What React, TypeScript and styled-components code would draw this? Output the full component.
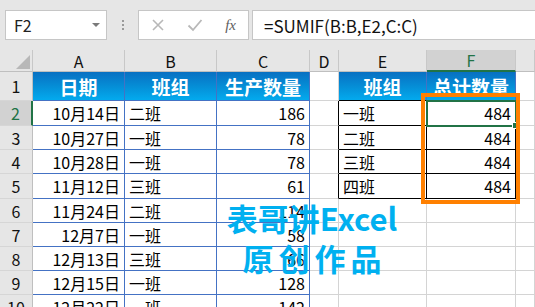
import styled, { createGlobalStyle, css } from "styled-components";

const GlobalStyle = createGlobalStyle`
  body {
    margin: 0;
    background: #ffffff;
    font-family: "Noto Sans CJK SC", "Noto Sans", sans-serif;
  }
`;

const GRID = "#d4d4d4";
const BLUE = "#4472c4";
const BLACK = "#000000";
const GREEN = "#217346";

const Page = styled.div`
  position: relative;
  width: 535px;
  height: 307px;
  overflow: hidden;
  background: #ffffff;
`;

const TopBar = styled.div`
  height: 50px;
  box-sizing: border-box;
  padding: 10px 0 0 5px;
  display: flex;
  align-items: flex-start;
  background: #e6e6e6;
`;

const Box = styled.div`
  height: 30px;
  box-sizing: border-box;
  background: #ffffff;
  border: 1px solid #c6c6c6;
  display: flex;
  align-items: center;
`;

const NameBox = styled(Box)`
  width: 102px;
  padding: 0 6px 0 8px;
  justify-content: space-between;
  font-size: 16px;
  color: #222;
`;

const Caret = styled.span`
  width: 0;
  height: 0;
  border-left: 4px solid transparent;
  border-right: 4px solid transparent;
  border-top: 4px solid #7a7a7a;
`;

const Dots = styled.div`
  width: 31px;
  height: 30px;
  display: flex;
  flex-direction: column;
  align-items: center;
  justify-content: center;
  gap: 2px;
  & > span {
    width: 2px;
    height: 2px;
    background: #9a9a9a;
  }
`;

const FxBox = styled(Box)`
  width: 111px;
  padding: 0 12px 0 12px;
  justify-content: space-between;
`;

const Fx = styled.span`
  font-family: "Liberation Serif", serif;
  font-style: italic;
  font-size: 15px;
  color: #606060;
`;

const FormulaBox = styled(Box)`
  flex: 1;
  margin-left: 3px;
  border-right: none;
  padding-left: 11px;
  font-size: 17px;
  color: #111;
`;

const Sheet = styled.div`
  display: grid;
  grid-template-columns: 33px 92px 92px 93px 29px 88px 89px 1fr;
  grid-template-rows: 22px 29px 25px 24px 24px 25px 24px 24px 24px 24px 24px;
`;

const Corner = styled.div`
  background: #e6e6e6;
  border-right: 1px solid #c8c8c8;
  border-bottom: 1px solid #bfbfbf;
  position: relative;
`;

const ColHead = styled.div<{ $sel?: boolean }>`
  display: flex;
  align-items: center;
  justify-content: center;
  font-size: 16px;
  color: #111;
  background: #e6e6e6;
  border-right: 1px solid #c8c8c8;
  border-bottom: 1px solid #bfbfbf;
  ${(p) =>
    p.$sel &&
    css`
      background: #d2d2d2;
      color: ${GREEN};
      border-bottom: 2px solid ${GREEN};
    `}
`;

const RowHead = styled.div<{ $sel?: boolean }>`
  display: flex;
  align-items: center;
  justify-content: center;
  font-size: 16px;
  color: #111;
  background: #e6e6e6;
  border-right: 1px solid #bfbfbf;
  border-bottom: 1px solid #d6d6d6;
  ${(p) =>
    p.$sel &&
    css`
      background: #d2d2d2;
      color: ${GREEN};
      border-right: 2px solid ${GREEN};
    `}
`;

const Cell = styled.div<{
  $align?: "left" | "right" | "center";
  $r: string;
  $b: string;
  $head?: boolean;
}>`
  box-sizing: border-box;
  display: flex;
  align-items: center;
  padding: 0 4px;
  white-space: nowrap;
  overflow: hidden;
  font-size: 16px;
  color: #000;
  justify-content: ${(p) =>
    p.$align === "right" ? "flex-end" : p.$align === "center" ? "center" : "flex-start"};
  border-right: 1px solid ${(p) => p.$r};
  border-bottom: 1px solid ${(p) => p.$b};
  ${(p) =>
    p.$head &&
    css`
      background: linear-gradient(180deg, #0870c2 0%, #0590d8 55%, #03aaee 100%);
      color: #ffffff;
      font-weight: 700;
      font-size: 19px;
    `}
`;

const OrangeBox = styled.div`
  position: absolute;
  left: 421px;
  top: 93px;
  width: 99px;
  height: 111px;
  box-sizing: border-box;
  border: 4px solid #ff8000;
  pointer-events: none;
`;

const Selection = styled.div`
  position: absolute;
  left: 426px;
  top: 100px;
  width: 91px;
  height: 27px;
  box-sizing: border-box;
  border: 2px solid ${GREEN};
  &::after {
    content: "";
    position: absolute;
    right: -4px;
    bottom: -4px;
    width: 5px;
    height: 5px;
    background: ${GREEN};
    border: 1px solid #fff;
  }
`;

const Watermark = styled.div`
  position: absolute;
  left: 212px;
  width: 200px;
  top: 198px;
  display: flex;
  flex-direction: column;
  align-items: center;
  color: #00b0f0;
  font-weight: 700;
  font-size: 31px;
  line-height: 40px;
  pointer-events: none;
`;

const Spaced = styled.span`
  letter-spacing: 5px;
  padding-left: 5px;
`;

type C = { t?: string; a?: "left" | "right" | "center"; r?: string; b?: string; h?: boolean };

const left: [string, string, string][] = [
  ["10月14日", "二班", "186"],
  ["10月27日", "一班", "78"],
  ["10月28日", "一班", "78"],
  ["11月12日", "三班", "61"],
  ["11月24日", "二班", "114"],
  ["12月7日", "一班", "58"],
  ["12月13日", "三班", "66"],
  ["12月15日", "一班", "128"],
  ["12月22日", "一班", "142"],
];
const right: [string, string][] = [
  ["一班", "484"],
  ["二班", "484"],
  ["三班", "484"],
  ["四班", "484"],
];

const rows: C[][] = [
  [
    { t: "日期", a: "center", r: BLUE, b: BLUE, h: true },
    { t: "班组", a: "center", r: BLUE, b: BLUE, h: true },
    { t: "生产数量", a: "center", r: BLUE, b: BLUE, h: true },
    { r: GRID, b: GRID },
    { t: "班组", a: "center", r: BLUE, b: BLACK, h: true },
    { t: "总计数量", a: "center", r: BLUE, b: BLACK, h: true },
    { r: GRID, b: GRID },
  ],
  ...left.map(([d, g, n], i) => {
    const e = right[i];
    return [
      { t: d, a: "right", r: BLUE, b: BLUE },
      { t: g, r: BLUE, b: BLUE },
      { t: n, a: "right", r: BLUE, b: BLUE },
      { r: e ? BLACK : GRID, b: GRID },
      e ? { t: e[0], r: BLACK, b: BLACK } : { r: GRID, b: GRID },
      e ? { t: e[1], a: "right", r: BLACK, b: BLACK } : { r: GRID, b: GRID },
      { r: GRID, b: GRID },
    ] as C[];
  }),
];

const cols = ["A", "B", "C", "D", "E", "F", ""];

export default function App() {
  return (
    <Page>
      <GlobalStyle />
      <TopBar>
        <NameBox>
          F2
          <Caret />
        </NameBox>
        <Dots>
          <span />
          <span />
          <span />
        </Dots>
        <FxBox>
          <svg width="14" height="14" viewBox="0 0 14 14">
            <path d="M2 2 L12 12 M12 2 L2 12" stroke="#b8b8b8" strokeWidth="1.6" fill="none" />
          </svg>
          <svg width="16" height="14" viewBox="0 0 16 14">
            <path d="M1.5 7.5 L6 12 L14.5 2" stroke="#b8b8b8" strokeWidth="1.8" fill="none" />
          </svg>
          <Fx>fx</Fx>
        </FxBox>
        <FormulaBox>=SUMIF(B:B,E2,C:C)</FormulaBox>
      </TopBar>
      <Sheet>
        <Corner>
          <svg width="33" height="22" viewBox="0 0 33 22" style={{ position: "absolute", left: 0, top: 0 }}>
            <polygon points="30,5 30,19 16,19" fill="#b8b8b8" />
          </svg>
        </Corner>
        {cols.map((c, i) => (
          <ColHead key={i} $sel={c === "F"}>
            {c}
          </ColHead>
        ))}
        {rows.map((row, ri) => [
          <RowHead key={`h${ri}`} $sel={ri === 1}>
            {ri + 1}
          </RowHead>,
          ...row.map((c, ci) => (
            <Cell key={`${ri}-${ci}`} $align={c.a} $r={c.r ?? GRID} $b={c.b ?? GRID} $head={c.h}>
              {c.t}
            </Cell>
          )),
        ])}
      </Sheet>
      <Selection />
      <OrangeBox />
      <Watermark>
        <span>表哥讲Excel</span>
        <Spaced>原创作品</Spaced>
      </Watermark>
    </Page>
  );
}
